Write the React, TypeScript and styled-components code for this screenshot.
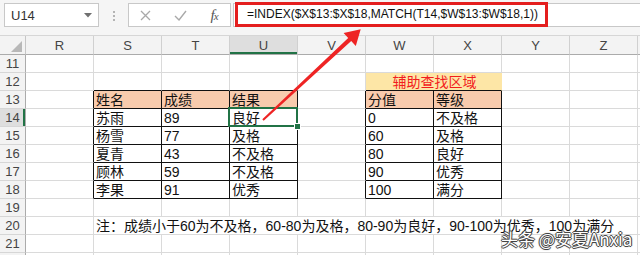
import React from "react";
import styled, { createGlobalStyle, css } from "styled-components";

const GlobalStyle = createGlobalStyle`
    html, body {
        margin: 0;
        padding: 0;
        background: #fff;
    }
    body {
        width: 640px;
        height: 255px;
        overflow: hidden;
        font-family: "Liberation Sans", "Noto Sans CJK SC", sans-serif;
    }
`;

const GREEN = "#217346";
const GRID = "#dadada";
const PEACH = "#f8cbad";
const COLS = ["R", "S", "T", "U", "V", "W", "X", "Y", "Z", "AA"];
const ROWS = [11, 12, 13, 14, 15, 16, 17, 18, 19, 20, 21, 22];

const Page = styled.div`
    position: relative;
    width: 640px;
    height: 255px;
    overflow: hidden;
    background: #fff;
`;

const Toolbar = styled.div`
    display: flex;
    align-items: flex-start;
    height: 36px;
    padding-top: 3px;
    box-sizing: border-box;
    background: #f5f5f5;
    border-bottom: 1px solid #d6d6d6;
`;

const NameBox = styled.div`
    display: flex;
    align-items: center;
    justify-content: space-between;
    margin-left: 4px;
    width: 95px;
    height: 24px;
    box-sizing: border-box;
    padding: 0 6px 0 6px;
    background: #fff;
    border: 1px solid #c8c8c8;
    font-size: 13px;
    color: #333;
`;

const Dots = styled.div`
    display: flex;
    flex-direction: column;
    align-items: center;
    gap: 2px;
    width: 29px;
    padding-top: 8px;
`;

const Dot = styled.span`
    width: 2px;
    height: 2px;
    background: #b4b4b4;
`;

const FuncBox = styled.div`
    display: flex;
    align-items: center;
    width: 103px;
    height: 24px;
    box-sizing: border-box;
    background: #fff;
    border: 1px solid #c8c8c8;
`;

const FuncSlot = styled.div<{ $w: number }>`
    display: flex;
    align-items: center;
    justify-content: center;
    width: ${p => p.$w}px;
`;

const Fx = styled.span`
    font-family: "Liberation Serif", serif;
    font-style: italic;
    font-size: 15px;
    color: #555;
    letter-spacing: -1px;
    & small {
        font-size: 11px;
    }
`;

const FormulaBar = styled.div`
    flex: 1;
    height: 24px;
    margin-left: 2px;
    box-sizing: border-box;
    background: #fff;
    border: 1px solid #c8c8c8;
    border-right: none;
`;

const Highlight = styled.div`
    width: 313px;
    height: 25px;
    margin-top: -2px;
    margin-left: 1px;
    box-sizing: border-box;
    border: 3px solid #e41e1e;
    padding-left: 9px;
    font-size: 12px;
    line-height: 19px;
    color: #111;
    white-space: nowrap;
`;

const Sheet = styled.div`
    display: grid;
    grid-template-columns: 26px repeat(9, 68px) 1fr;
    grid-template-rows: 19px;
    grid-auto-rows: 18px;
`;

const Corner = styled.div`
    display: flex;
    align-items: flex-end;
    justify-content: flex-end;
    padding: 0 3px 2px 0;
    box-sizing: border-box;
    background: #f3f3f3;
    border-right: 1px solid #c6c6c6;
    border-bottom: 1px solid #ababab;
`;

const CornerMark = styled.span`
    width: 11px;
    height: 11px;
    background: #b8b8b8;
    clip-path: polygon(100% 0, 100% 100%, 0 100%);
`;

const ColHead = styled.div<{ $selected?: boolean }>`
    box-sizing: border-box;
    background: ${p => (p.$selected ? "#dedede" : "#f3f3f3")};
    border-right: 1px solid #d0d0d0;
    border-bottom: 1px solid #ababab;
    box-shadow: ${p => (p.$selected ? `inset 0 -2px 0 ${GREEN}` : "none")};
    text-align: center;
    font-size: 13px;
    line-height: 19px;
    color: #444;
`;

const RowHead = styled.div<{ $selected?: boolean }>`
    box-sizing: border-box;
    background: ${p => (p.$selected ? "#dedede" : "#f3f3f3")};
    border-right: 1px solid #ababab;
    border-bottom: 1px solid #d6d6d6;
    box-shadow: ${p => (p.$selected ? `inset -2px 0 0 ${GREEN}` : "none")};
    text-align: center;
    font-size: 13px;
    line-height: 18px;
    color: #444;
`;

const Cell = styled.div<{
    $fill?: string;
    $color?: string;
    $align?: "left" | "center";
    $span: number;
    $rightDark: boolean;
    $bottomDark: boolean;
    $selected?: boolean;
}>`
    grid-column: span ${p => p.$span};
    box-sizing: border-box;
    background: ${p => p.$fill ?? "#fff"};
    border-right: 1px solid ${p => (p.$rightDark ? "#111" : p.$fill ?? GRID)};
    border-bottom: 1px solid ${p => (p.$bottomDark ? "#111" : GRID)};
    padding-left: 2px;
    font-size: 14px;
    line-height: 18px;
    color: ${p => p.$color ?? "#111"};
    text-align: ${p => p.$align ?? "left"};
    white-space: nowrap;
    ${p =>
        p.$selected &&
        css`
            position: relative;
            &::after {
                content: "";
                position: absolute;
                left: -2px;
                top: -2px;
                right: -1px;
                bottom: -1px;
                border: 2px solid ${GREEN};
                z-index: 2;
            }
            &::before {
                content: "";
                position: absolute;
                right: -4px;
                bottom: -4px;
                width: 5px;
                height: 5px;
                background: ${GREEN};
                border: 1px solid #fff;
                z-index: 3;
            }
        `}
`;

const ArrowLayer = styled.svg`
    position: absolute;
    left: 0;
    top: 0;
    pointer-events: none;
    z-index: 5;
`;

const Watermark = styled.div`
    position: absolute;
    left: 501px;
    top: 228px;
    z-index: 6;
    font-family: "Noto Sans CJK SC", sans-serif;
    font-size: 17px;
    line-height: 22px;
    color: #fff;
    white-space: nowrap;
    text-shadow: 1px 0 0 #444, -1px 0 0 #444, 0 1px 0 #444, 0 -1px 0 #444, 0 0 2px #333;
`;

interface CellData {
    text?: string;
    fill?: string;
    color?: string;
    align?: "left" | "center";
    span?: number;
}

const NOTE = "注：成绩小于60为不及格，60-80为及格，80-90为良好，90-100为优秀，100为满分";

const h = (text: string): CellData => ({ text, fill: PEACH });

const DATA: Record<number, Record<string, CellData | string>> = {
    12: { W: { text: "辅助查找区域", fill: "#fde6a6", color: "#f21d1d", align: "center", span: 2 } },
    13: { S: h("姓名"), T: h("成绩"), U: h("结果"), W: h("分值"), X: h("等级") },
    14: { S: "苏雨", T: "89", U: "良好", W: "0", X: "不及格" },
    15: { S: "杨雪", T: "77", U: "及格", W: "60", X: "及格" },
    16: { S: "夏青", T: "43", U: "不及格", W: "80", X: "良好" },
    17: { S: "顾林", T: "59", U: "不及格", W: "90", X: "优秀" },
    18: { S: "李果", T: "91", U: "优秀", W: "100", X: "满分" },
    20: { S: { text: NOTE, span: 8 } },
};

const inBox = (r: number, c: string) => {
    if (r < 13 || r > 18) return false;
    return ["S", "T", "U", "W", "X"].includes(c);
};

function cellAt(r: number, c: string): CellData {
    const v = DATA[r]?.[c];
    if (!v) return {};
    return typeof v === "string" ? { text: v } : v;
}

function SheetRow({ r }: { r: number }) {
    // row 22 only peeks in at the bottom edge, its number is not visible
    const out: React.ReactNode[] = [
        <RowHead key="h" $selected={r === 14}>{r < 22 ? r : ""}</RowHead>,
    ];
    let i = 0;
    while (i < COLS.length) {
        const c = COLS[i];
        const d = cellAt(r, c);
        const span = d.span ?? 1;
        const last = COLS[i + span - 1];
        const next = COLS[i + span];
        out.push(
            <Cell
                key={c}
                $span={span}
                $fill={d.fill}
                $color={d.color}
                $align={d.align}
                $rightDark={inBox(r, last) || (!!next && inBox(r, next))}
                $bottomDark={inBox(r, c) || inBox(r + 1, c)}
                $selected={r === 14 && c === "U"}
            >
                {d.text}
            </Cell>
        );
        i += span;
    }
    return <>{out}</>;
}

// tapered arrow from the U14 cell up to the formula box
const arrow = (() => {
    const tail = [263, 120];
    const tip = [360.7, 29.3];
    const dx = tip[0] - tail[0];
    const dy = tip[1] - tail[1];
    const len = Math.hypot(dx, dy);
    const u = [dx / len, dy / len];
    const n = [-u[1], u[0]];
    const base = [tip[0] - 15 * u[0], tip[1] - 15 * u[1]];
    const at = (p: number[], w: number) => `${(p[0] + n[0] * w).toFixed(1)},${(p[1] + n[1] * w).toFixed(1)}`;
    return [at(tail, -1.1), at(base, -2.2), at(base, -9), `${tip[0]},${tip[1]}`, at(base, 9), at(base, 2.2), at(tail, 1.1)].join(" ");
})();

export default function App() {
    return (
        <Page>
            <GlobalStyle />
            <Toolbar>
                <NameBox>
                    <span>U14</span>
                    <svg width="8" height="5" viewBox="0 0 8 5">
                        <path d="M0 0 L8 0 L4 4.5 Z" fill="#707070" />
                    </svg>
                </NameBox>
                <Dots>
                    <Dot />
                    <Dot />
                    <Dot />
                </Dots>
                <FuncBox>
                    <FuncSlot $w={33}>
                        <svg width="11" height="11" viewBox="0 0 11 11">
                            <path d="M1 1 L10 10 M10 1 L1 10" stroke="#a9a9a9" strokeWidth="1.3" />
                        </svg>
                    </FuncSlot>
                    <FuncSlot $w={36}>
                        <svg width="13" height="11" viewBox="0 0 13 11">
                            <path d="M1 6 L5 10 L12 1" stroke="#a9a9a9" strokeWidth="1.4" fill="none" />
                        </svg>
                    </FuncSlot>
                    <FuncSlot $w={32}>
                        <Fx>
                            f<small>x</small>
                        </Fx>
                    </FuncSlot>
                </FuncBox>
                <FormulaBar>
                    <Highlight>=INDEX($X$13:$X$18,MATCH(T14,$W$13:$W$18,1))</Highlight>
                </FormulaBar>
            </Toolbar>
            <Sheet>
                <Corner>
                    <CornerMark />
                </Corner>
                {COLS.map(c => (
                    <ColHead key={c} $selected={c === "U"}>
                        {c === "AA" ? "" : c}
                    </ColHead>
                ))}
                {ROWS.map(r => (
                    <SheetRow key={r} r={r} />
                ))}
            </Sheet>
            <ArrowLayer width="640" height="255" viewBox="0 0 640 255">
                <polygon points={arrow} fill="#ee2424" />
            </ArrowLayer>
            <Watermark>头条 @安夏Anxia</Watermark>
        </Page>
    );
}
